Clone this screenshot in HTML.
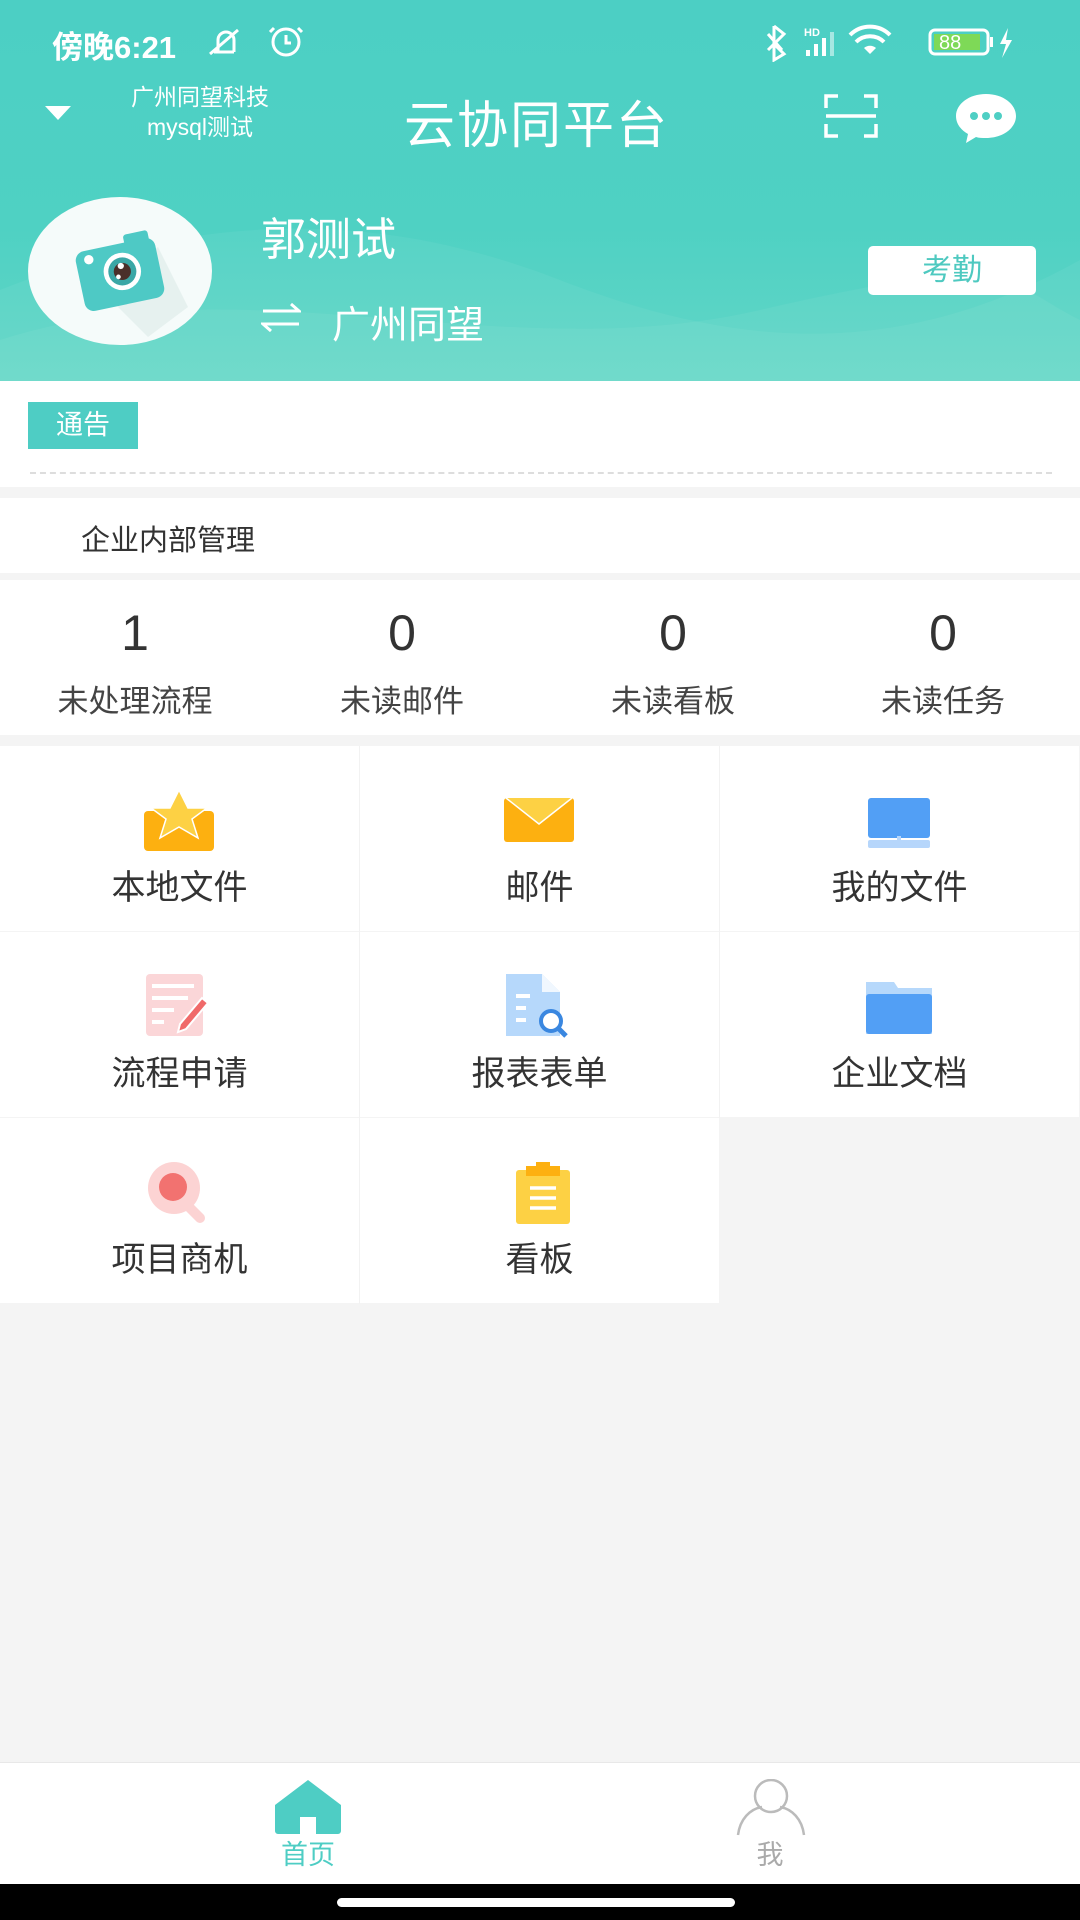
<!DOCTYPE html>
<html><head><meta charset="utf-8"><style>
*{margin:0;padding:0;box-sizing:border-box}
body{width:1080px;height:1920px;background:#f4f4f4;font-family:"Liberation Sans","Noto Sans CJK SC",sans-serif;position:relative;overflow:hidden;color:#333}
.abs{position:absolute}
.hdr{left:0;top:0;width:1080px;height:381px;background:linear-gradient(180deg,#4ccfc4 0%,#4fd1c3 60%,#62d6c7 100%);overflow:hidden}
.w{color:#fff}
.cell{position:absolute;width:359px;height:185px;background:#fff;text-align:center}
.cell .lb{position:absolute;left:0;width:100%;top:121px;font-size:34px;color:#333;line-height:42px}
.cell svg{position:absolute;left:144px;top:42px}
.st{position:absolute;top:0;width:270px;text-align:center}
.st .n{font-size:50px;color:#333;position:absolute;width:100%;top:24px}
.st .l{font-size:31px;color:#444;position:absolute;width:100%;top:96px}
</style></head><body>
<div class="abs hdr">
  <svg class="abs" style="left:0;top:200px" width="1080" height="181"><path d="M0 90 C200 10 380 10 560 80 S900 160 1080 60 L1080 181 L0 181Z" fill="#ffffff" opacity="0.05"/><path d="M0 140 C250 60 500 170 760 110 S1000 80 1080 120 L1080 181 L0 181Z" fill="#ffffff" opacity="0.05"/></svg>
  <div class="abs w" style="left:52px;top:22px;font-size:31px;font-weight:bold">傍晚6:21</div>
  <svg class="abs" style="left:206px;top:24px" width="100" height="36"><g stroke="#fff" stroke-width="3" fill="none"><path d="M8 28 L28 28 M12 28 V16 a8 8 0 0 1 16 0 V28 M4 30 L32 6"/><circle cx="80" cy="18" r="13"/><path d="M80 11 v8 h5 M68 4 l-4 4 M92 4 l4 4"/></g></svg>
  <svg class="abs" style="left:764px;top:22px" width="260" height="40"><g fill="#fff"><path d="M10 4 L20 12 L10 22 L20 32 L10 38 V4 M4 12 L18 28 M4 28 L12 20" stroke="#fff" stroke-width="3" fill="none"/><text x="40" y="14" font-size="11" font-family="Liberation Sans" font-weight="bold" fill="#fff">HD</text><rect x="42" y="28" width="4" height="6"/><rect x="50" y="22" width="4" height="12"/><rect x="58" y="16" width="4" height="18"/><rect x="66" y="10" width="4" height="24" opacity=".5"/><path d="M106 32 l-6 -6 a9 9 0 0 1 12 0z"/><path d="M92 20 a20 20 0 0 1 28 0" stroke="#fff" stroke-width="4" fill="none"/><path d="M86 13 a28 28 0 0 1 40 0" stroke="#fff" stroke-width="4" fill="none"/><rect x="166" y="8" width="58" height="24" rx="5" stroke="#fff" stroke-width="3" fill="none"/><rect x="170" y="12" width="46" height="16" fill="#7ed957"/><text x="175" y="27" font-size="20" font-family="Liberation Sans" fill="#fff">88</text><rect x="226" y="15" width="3" height="10"/><path d="M244 6 l-8 16 h6 l-4 14 l10 -18 h-6z"/></g></svg>
  <svg class="abs" style="left:45px;top:106px" width="26" height="14"><path d="M0 0 H26 L13 14Z" fill="#fff"/></svg>
  <div class="abs w" style="left:105px;top:82px;width:190px;text-align:center;font-size:23px;line-height:30px">广州同望科技<br>mysql测试</div>
  <div class="abs w" style="left:404px;top:84px;font-size:51px;letter-spacing:2px">云协同平台</div>
  <svg class="abs" style="left:824px;top:94px" width="54" height="44"><g stroke="#fff" stroke-width="3.5" fill="none"><path d="M2 14 V2 H14 M40 2 H52 V14 M2 30 V42 H14 M40 42 H52 V30 M2 22 H52"/></g></svg>
  <svg class="abs" style="left:954px;top:92px" width="64" height="52"><path d="M32 2 C15 2 2 12 2 24 c0 8 5 14 12 18 l-2 9 l10 -6 c3 1 6 1 10 1 c17 0 30 -10 30 -22 S49 2 32 2z" fill="#fff"/><circle cx="20" cy="24" r="4" fill="#4ecfc4"/><circle cx="32" cy="24" r="4" fill="#4ecfc4"/><circle cx="44" cy="24" r="4" fill="#4ecfc4"/></svg>
  <svg class="abs" style="left:28px;top:197px" width="186" height="148"><ellipse cx="92" cy="74" rx="92" ry="74" fill="#f5fbfa"/><path d="M75 95 L120 140 L160 110 L130 50Z" fill="#e6f1ef"/><g transform="translate(92 76) scale(0.78) translate(-90 -85)"><rect x="95" y="33" width="32" height="20" rx="4" fill="#4ec9c5" transform="rotate(-12 110 43)"/><rect x="38" y="48" width="104" height="78" rx="12" fill="#4ec9c5" transform="rotate(-12 90 87)"/><circle cx="50" cy="68" r="6" fill="#fff"/><circle cx="93" cy="83" r="24" fill="#fff"/><circle cx="93" cy="83" r="18" fill="#3aa7a6"/><circle cx="93" cy="83" r="11" fill="#4a2f2a"/><circle cx="91" cy="76" r="4" fill="#fff"/><circle cx="88" cy="90" r="3" fill="#fff"/></g></svg>
  <div class="abs w" style="left:261px;top:203px;font-size:45px">郭测试</div>
  <svg class="abs" style="left:261px;top:302px" width="40" height="30"><g stroke="#fff" stroke-width="3" fill="none"><path d="M2 9 H38 L30 2 M38 22 H2 L10 29"/></g></svg>
  <div class="abs w" style="left:332px;top:294px;font-size:38px">广州同望</div>
  <div class="abs" style="left:868px;top:246px;width:168px;height:49px;background:#fff;border-radius:5px;color:#4ec9c0;font-size:30px;text-align:center;line-height:49px">考勤</div>
</div>
<div class="abs" style="left:0;top:381px;width:1080px;height:106px;background:#fff"></div>
<div class="abs" style="left:28px;top:402px;width:110px;height:47px;background:#4ecdc4;color:#fff;font-size:27px;text-align:center;line-height:47px">通告</div>
<div class="abs" style="left:30px;top:472px;width:1022px;border-top:2px dashed #ddd"></div>
<div class="abs" style="left:0;top:498px;width:1080px;height:75px;background:#fff"></div>
<div class="abs" style="left:81px;top:517px;font-size:29px;color:#333">企业内部管理</div>
<div class="abs" style="left:0;top:580px;width:1080px;height:155px;background:#fff">
  <div class="st" style="left:0"><div class="n">1</div><div class="l">未处理流程</div></div>
  <div class="st" style="left:267px"><div class="n">0</div><div class="l">未读邮件</div></div>
  <div class="st" style="left:538px"><div class="n">0</div><div class="l">未读看板</div></div>
  <div class="st" style="left:808px"><div class="n">0</div><div class="l">未读任务</div></div>
</div>
<div class="cell" style="left:0;top:746px"><svg width="72" height="64"><rect x="0" y="23" width="70" height="40" rx="4" fill="#fdb010"/><path d="M35 2 l9 18 h19 l-15 11 l6 19 l-19 -11 l-19 11 l6 -19 l-15 -11 h19z" fill="#fdd144" stroke="#fff" stroke-width="1.5"/></svg><div class="lb">本地文件</div></div>
<div class="cell" style="left:360px;top:746px"><svg width="72" height="64"><rect x="0" y="10" width="70" height="44" rx="3" fill="#fdb010"/><path d="M2 10 L35 36 L68 10" fill="#fdd144" stroke="#fff" stroke-width="1.5"/></svg><div class="lb">邮件</div></div>
<div class="cell" style="left:720px;top:746px"><svg width="72" height="64"><rect x="4" y="10" width="62" height="40" rx="3" fill="#529ff5"/><rect x="4" y="52" width="62" height="8" rx="2" fill="#b6d6fb"/><rect x="33" y="48" width="4" height="6" fill="#b6d6fb"/></svg><div class="lb">我的文件</div></div>
<div class="cell" style="left:0;top:932px"><svg width="72" height="64"><rect x="2" y="0" width="57" height="62" rx="4" fill="#fbd6d8"/><g stroke="#fff" stroke-width="4"><path d="M8 12 H50 M8 24 H44 M8 36 H30 M8 48 H20"/></g><path d="M36 50 L58 24 l6 5 L42 55 l-8 3z" fill="#f06a6a" stroke="#fff" stroke-width="2"/></svg><div class="lb">流程申请</div></div>
<div class="cell" style="left:360px;top:932px"><svg width="72" height="64"><path d="M2 0 H38 L56 18 V62 H2Z" fill="#b6d8fb"/><path d="M38 0 V18 H56" fill="#fff" opacity=".8"/><g stroke="#fff" stroke-width="4"><path d="M12 22 H26 M12 34 H22 M12 46 H22"/></g><circle cx="47" cy="47" r="10" fill="#fff" stroke="#3a87e0" stroke-width="4"/><path d="M54 54 L62 62" stroke="#3a87e0" stroke-width="5"/></svg><div class="lb">报表表单</div></div>
<div class="cell" style="left:720px;top:932px"><svg width="72" height="64"><path d="M2 8 H30 L34 14 H68 V60 H2Z" fill="#b6d8fb"/><rect x="2" y="20" width="66" height="40" rx="3" fill="#529ff5"/></svg><div class="lb">企业文档</div></div>
<div class="cell" style="left:0;top:1118px"><svg width="72" height="64"><circle cx="30" cy="28" r="26" fill="#fcd3d3"/><path d="M44 46 L56 58" stroke="#fcd3d3" stroke-width="10" stroke-linecap="round"/><circle cx="29" cy="27" r="14" fill="#f27270"/></svg><div class="lb">项目商机</div></div>
<div class="cell" style="left:360px;top:1118px"><svg width="72" height="64"><rect x="12" y="10" width="54" height="54" rx="3" fill="#fdd144"/><path d="M22 6 h34 v10 h-34z M32 2 h14 v6 h-14z" fill="#fdb010"/><g stroke="#fff" stroke-width="3.5"><path d="M26 28 H52 M26 38 H52 M26 48 H52"/></g></svg><div class="lb">看板</div></div>
<div class="abs" style="left:359px;top:746px;width:1px;height:558px;background:#f2f2f2"></div>
<div class="abs" style="left:719px;top:746px;width:1px;height:372px;background:#f2f2f2"></div>
<div class="abs" style="left:0;top:1762px;width:1080px;height:122px;background:#fff;border-top:1px solid #e8e8e8"></div>
<svg class="abs" style="left:274px;top:1779px" width="68" height="56"><path d="M34 1 L67 26 V52 a3 3 0 0 1 -3 3 H42 V38 H26 V55 H4 a3 3 0 0 1 -3 -3 V26Z" fill="#4ecdc4"/></svg>
<div class="abs" style="left:270px;top:1833px;width:76px;text-align:center;font-size:27px;color:#4ecdc4">首页</div>
<svg class="abs" style="left:736px;top:1779px" width="70" height="58"><g stroke="#bbb" stroke-width="2.5" fill="none"><ellipse cx="35" cy="17" rx="16" ry="16"/><path d="M2 56 C4 40 14 30 26 28 M68 56 C66 40 56 30 44 28"/></g></svg>
<div class="abs" style="left:735px;top:1833px;width:70px;text-align:center;font-size:27px;color:#aaa">我</div>
<div class="abs" style="left:0;top:1884px;width:1080px;height:36px;background:#000"></div>
<div class="abs" style="left:337px;top:1898px;width:398px;height:9px;border-radius:5px;background:#fff"></div>
</body></html>
